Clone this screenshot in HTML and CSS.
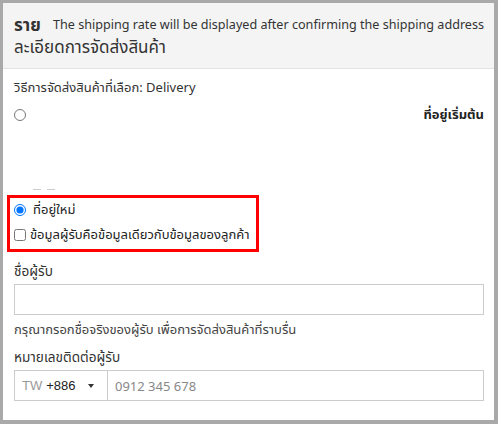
FILE: index.html
```html
<!DOCTYPE html>
<html lang="th">
<head>
  <meta charset="UTF-8">
  <meta name="viewport" content="width=device-width, initial-scale=1.0">
  <title>รายละเอียดการจัดส่งสินค้า</title>
  <link rel="stylesheet" href="styles.css">
</head>
<body>
  <div class="panel">
    <!-- หัวข้อ -->
    <div class="panel-head">
      <span class="note">The shipping rate will be displayed after confirming the shipping address</span>
      <h2 class="title">ราย<wbr>ละเอียดการจัดส่งสินค้า</h2>
    </div>

    <div class="panel-body">
      <p class="method">วิธีการจัดส่งสินค้าที่เลือก: Delivery</p>

      <div class="address-row">
        <input type="radio" name="address" class="radio">
        <span class="address-name">ที่อยู่เริ่มต้น</span>
      </div>
      <div class="address-gap"><i></i><i></i></div>

      <div class="highlight">
        <label class="check-row">
          <input type="radio" name="address" class="radio" checked>
          <span>ที่อยู่ใหม่</span>
        </label>
        <label class="check-row small">
          <input type="checkbox" class="checkbox">
          <span>ข้อมูลผู้รับคือข้อมูลเดียวกับข้อมูลของลูกค้า</span>
        </label>
      </div>

      <div class="field">
        <label class="field-label">ชื่อผู้รับ</label>
        <input type="text" class="text-input">
        <p class="hint">กรุณากรอกชื่อจริงของผู้รับ เพื่อการจัดส่งสินค้าที่ราบรื่น</p>
      </div>

      <div class="field">
        <label class="field-label">หมายเลขติดต่อผู้รับ</label>
        <div class="phone">
          <div class="phone-code">
            <span class="cc">TW</span>
            <span>+886</span>
            <span class="caret"></span>
          </div>
          <input type="tel" class="phone-input" placeholder="0912 345 678">
        </div>
      </div>
    </div>
  </div>
</body>
</html>
```
FILE: styles.css
```css
body {
  margin: 0;
  background: #a9a9a9;
  padding: 3px 4px 4px 3px;
  font-family: "Noto Sans", "Noto Sans Thai", sans-serif;
  color: #333;
}
.panel {
  background: white;
  height: 417px;
  overflow: hidden;
}
.panel-head {
  background: #f4f4f4;
  border-bottom: 1px solid #e2e2e2;
  padding: 11px 10px 12px 11px;
  height: 42px;
}
.note {
  float: right;
  font-size: 12.6px;
  line-height: 22px;
  color: #333;
  margin-left: 4px;
}
.title {
  margin: 0;
  font-size: 17px;
  line-height: 22px;
  font-weight: normal;
  color: #333;
}
.title::first-line {
  font-weight: bold;
}
.panel-body {
  padding: 6px 10px 0 11px;
}
.method {
  margin: 0;
  font-size: 13px;
  line-height: 24px;
}
.address-row {
  display: flex;
  justify-content: space-between;
  align-items: center;
  margin-top: 4px;
  height: 24px;
}
.address-name {
  font-size: 13px;
  font-weight: bold;
  color: #222;
}
.radio {
  width: 12px;
  height: 12px;
  margin: 0;
}
/* เศษขอบของรายการที่อยู่ที่ถูกซ่อน */
.address-gap {
  display: flex;
  gap: 6px;
  height: 2px;
  margin-top: 62px;
  padding-left: 19px;
}
.address-gap i {
  width: 8px;
  height: 1px;
  background: #ccc;
}
.highlight {
  width: 242px;
  margin: 4px 0 0 -7px;
  padding: 0 0 0 4px;
  border: 3px solid #ff0000;
}
.check-row {
  display: flex;
  align-items: center;
  gap: 7px;
  height: 23px;
  font-size: 13px;
  color: #222;
}
.check-row.small {
  gap: 4px;
  height: 28px;
}
.checkbox {
  width: 12px;
  height: 12px;
  margin: 0;
}
.field {
  margin-top: 9px;
}
.field-label {
  display: block;
  font-size: 13.6px;
  line-height: 20px;
  margin-bottom: 3px;
}
.text-input {
  display: block;
  box-sizing: border-box;
  width: 100%;
  height: 31px;
  border: 1px solid #ccc;
  margin: 0;
}
.hint {
  margin: 5px 0 0;
  font-size: 13px;
  line-height: 18px;
  color: #444;
}
.phone {
  display: flex;
  height: 31px;
  margin-top: 2px;
  border: 1px solid #ccc;
  box-sizing: border-box;
}
.phone-code {
  width: 93px;
  display: flex;
  align-items: center;
  gap: 4px;
  padding-left: 7px;
  box-sizing: border-box;
  border-right: 1px solid #ccc;
  font-family: "Liberation Sans", Arial, sans-serif;
  font-size: 13px;
  color: #222;
}
.cc {
  color: #999;
}
.caret {
  margin-left: 8px;
  border-left: 3.5px solid transparent;
  border-right: 3.5px solid transparent;
  border-top: 4px solid #333;
}
.phone-input {
  flex: 1;
  border: none;
  padding: 0 7px;
  font-family: "Noto Sans", sans-serif;
  font-size: 13px;
  outline: none;
}
.phone-input::placeholder {
  color: #888;
}
```
